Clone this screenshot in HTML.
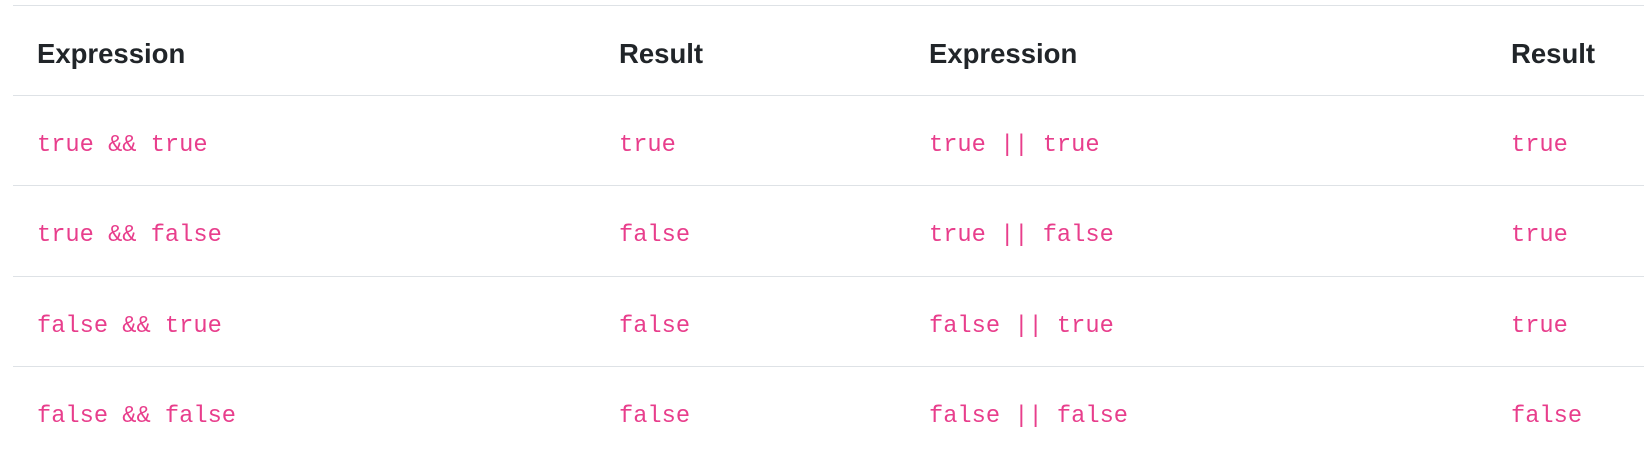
<!DOCTYPE html>
<html><head><style>
body{margin:0;width:1644px;height:463px;background:#fff;overflow:hidden;position:relative;font-family:"Liberation Sans",sans-serif}
.l{position:absolute;left:13px;right:0;height:1px;background:#dee2e6}
.h{position:absolute;font-weight:bold;font-size:27.5px;color:#212529;line-height:1}
.c{position:absolute;font-family:"Liberation Mono",monospace;font-size:23.7px;color:#e83e8c;line-height:1}
</style></head><body>
<div class="l" style="top:5px"></div>
<div class="l" style="top:95px"></div>
<div class="l" style="top:185px"></div>
<div class="l" style="top:276px"></div>
<div class="l" style="top:366px"></div>
<div class="h" style="left:37px;top:40px">Expression</div>
<div class="h" style="left:619px;top:40px">Result</div>
<div class="h" style="left:929px;top:40px">Expression</div>
<div class="h" style="left:1511px;top:40px">Result</div>

<div class="c" style="left:37px;top:134px">true &amp;&amp; true</div>
<div class="c" style="left:619px;top:134px">true</div>
<div class="c" style="left:929px;top:134px">true || true</div>
<div class="c" style="left:1511px;top:134px">true</div>

<div class="c" style="left:37px;top:224px">true &amp;&amp; false</div>
<div class="c" style="left:619px;top:224px">false</div>
<div class="c" style="left:929px;top:224px">true || false</div>
<div class="c" style="left:1511px;top:224px">true</div>

<div class="c" style="left:37px;top:315px">false &amp;&amp; true</div>
<div class="c" style="left:619px;top:315px">false</div>
<div class="c" style="left:929px;top:315px">false || true</div>
<div class="c" style="left:1511px;top:315px">true</div>

<div class="c" style="left:37px;top:405px">false &amp;&amp; false</div>
<div class="c" style="left:619px;top:405px">false</div>
<div class="c" style="left:929px;top:405px">false || false</div>
<div class="c" style="left:1511px;top:405px">false</div>
</body></html>
